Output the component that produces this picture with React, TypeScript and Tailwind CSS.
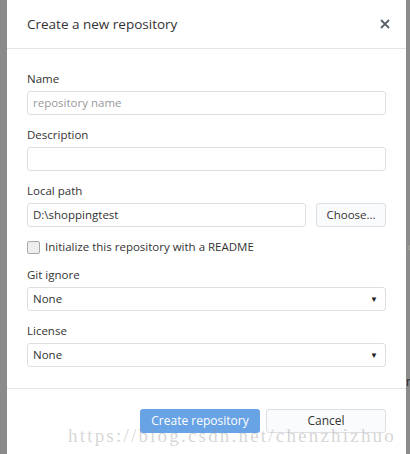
const font = { fontFamily: '"Open Sans", "Noto Sans", sans-serif' };

function Label({ children }: { children: string }) {
  return <div className="text-[11.5px] leading-[16px] text-[#333] mb-[4px]">{children}</div>;
}

function Select({ value }: { value: string }) {
  return (
    <div className="h-[24px] border border-[#dcdfe4] rounded-[3px] bg-white flex items-center justify-between pl-[5px] pr-[7px] text-[11.5px] text-[#333]">
      <span>{value}</span>
      <span className="text-[8px] text-[#222] leading-none">▼</span>
    </div>
  );
}

export default function App() {
  return (
    <div className="w-[410px] h-[454px] bg-[#8b8b8b] flex overflow-hidden relative" style={font}>
      <div className="w-[7px] shrink-0" />
      <div className="w-[399px] bg-white flex flex-col">
        {/* header */}
        <div className="h-[49px] border-b border-[#e1e4e8] flex items-center justify-between pl-[20px] pr-[16px]">
          <span className="text-[13.5px] text-[#333] font-medium">Create a new repository</span>
          <svg width="10" height="10" viewBox="0 0 10 10" className="text-[#586069]">
            <path d="M1 1 L9 9 M9 1 L1 9" stroke="currentColor" strokeWidth="1.8" />
          </svg>
        </div>

        {/* body */}
        <div className="px-[20px] pt-[22px] pb-[21px] flex flex-col border-b border-[#e1e4e8]">
          <Label>Name</Label>
          <div className="h-[24px] border border-[#dcdfe4] rounded-[3px] flex items-center px-[5px] text-[11.5px] text-[#999]">
            repository name
          </div>

          <div className="mt-[12px]">
            <Label>Description</Label>
            <div className="h-[24px] border border-[#dcdfe4] rounded-[3px]" />
          </div>

          <div className="mt-[12px]">
            <Label>Local path</Label>
            <div className="flex gap-[10px]">
              <div className="flex-1 h-[24px] border border-[#dcdfe4] rounded-[3px] flex items-center px-[5px] text-[11.5px] text-[#333]">
                D:\shoppingtest
              </div>
              <div className="w-[70px] h-[24px] border border-[#dcdfe4] rounded-[3px] bg-[#fafbfc] flex items-center justify-center text-[11.5px] text-[#333]">
                Choose...
              </div>
            </div>
          </div>

          <div className="mt-[12px] flex items-center gap-[5px] h-[16px]">
            <div className="w-[13px] h-[13px] border border-[#a8a8a8] rounded-[2px] bg-[#eeeeee]" />
            <span className="text-[11.5px] text-[#333]">Initialize this repository with a README</span>
          </div>

          <div className="mt-[12px]">
            <Label>Git ignore</Label>
            <Select value="None" />
          </div>

          <div className="mt-[12px]">
            <Label>License</Label>
            <Select value="None" />
          </div>
        </div>

        {/* footer */}
        <div className="flex justify-end gap-[6px] pr-[20px] pt-[20px]">
          <div className="w-[120px] h-[24px] rounded-[3px] bg-[#68a3e5] text-white text-[12px] flex items-center justify-center">
            Create repository
          </div>
          <div className="w-[120px] h-[24px] rounded-[3px] border border-[#dcdfe4] bg-[#fafbfc] text-[#333] text-[12px] flex items-center justify-center">
            Cancel
          </div>
        </div>
      </div>
      <div className="flex-1 relative">
        <span className="absolute left-[1px] top-[238px] text-[12px] text-[#a8a8a8]">‹</span>
        <span className="absolute left-[0px] top-[373px] text-[12px] text-[#222]">r</span>
      </div>

      {/* watermark */}
      <div
        className="absolute left-[68px] top-[424px] text-[19px] leading-[24px] tracking-[2.2px] pointer-events-none whitespace-nowrap"
        style={{ fontFamily: '"Liberation Serif", serif', color: 'rgba(150,150,150,0.4)' }}
      >
        https://blog.csdn.net/chenzhizhuo
      </div>
    </div>
  );
}
